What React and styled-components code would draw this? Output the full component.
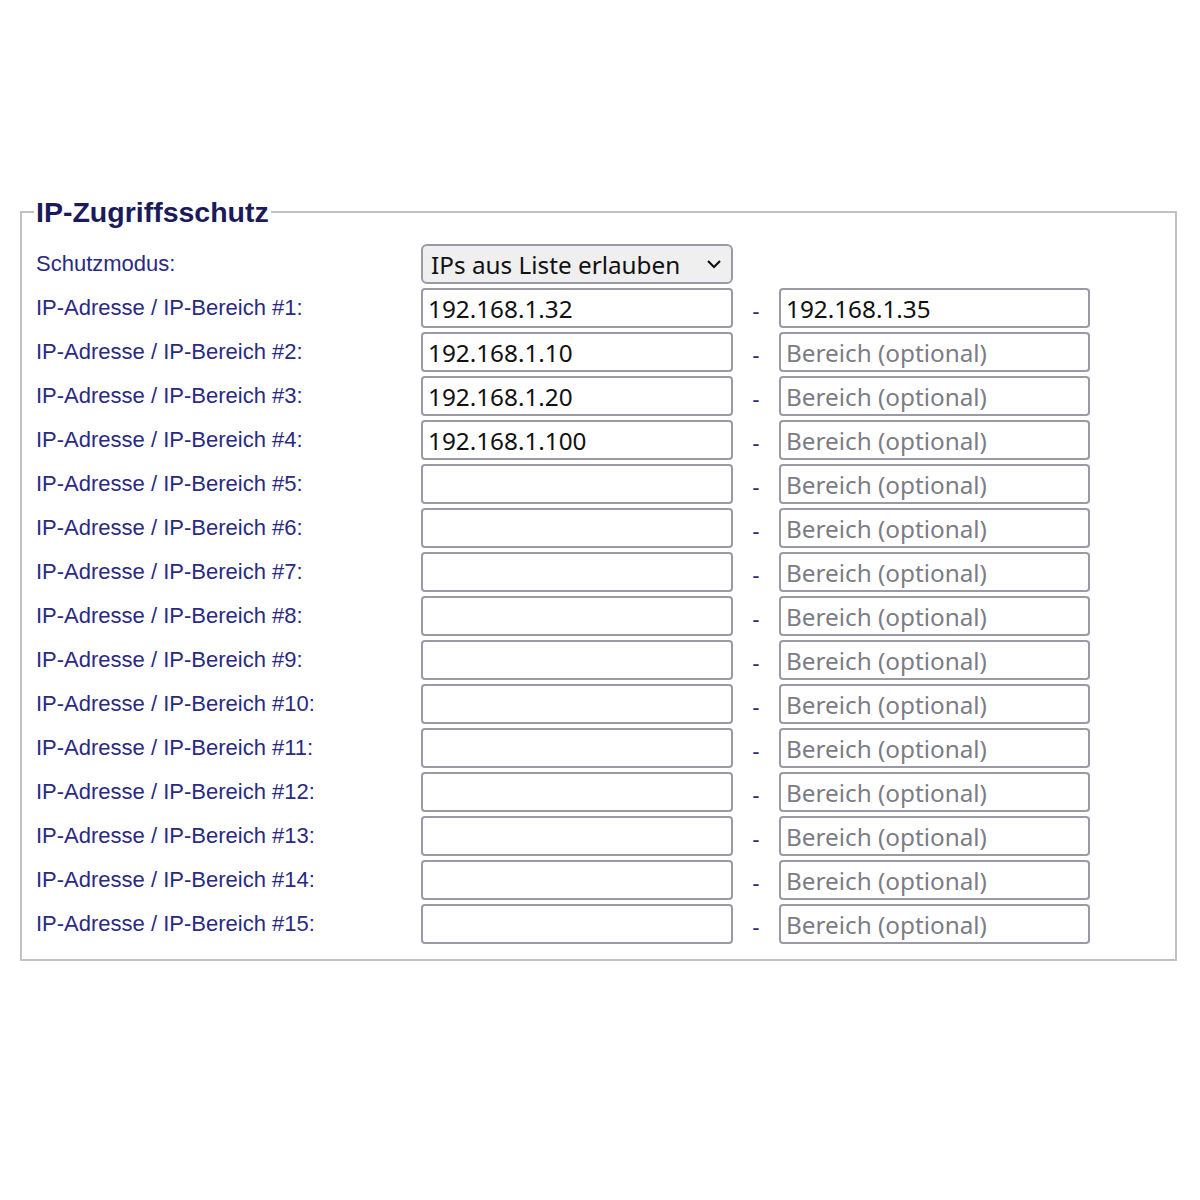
import React, { useState } from "react";
import styled, { createGlobalStyle } from "styled-components";

const GlobalStyle = createGlobalStyle`
  html, body {
    margin: 0;
    padding: 0;
    background: #ffffff;
  }
  body {
    font-family: "Liberation Sans", Arial, sans-serif;
  }
`;

const Page = styled.div`
  padding: 196px 23px 0 20px;
  width: 1200px;
  box-sizing: border-box;
`;

const Fieldset = styled.fieldset`
  margin: 0;
  width: 1157px;
  box-sizing: border-box;
  border: 2px solid #c2c2c2;
  padding: 16px 14px 15px 14px;
`;

const Legend = styled.legend`
  margin-left: -2px;
  padding: 0 2px;
  font-family: "Liberation Sans", Arial, sans-serif;
  font-weight: bold;
  font-size: 28.5px;
  line-height: 32px;
  color: #1b1b5c;
`;

const Grid = styled.div`
  display: grid;
  grid-template-columns: 385px 312px 46px 311px;
  grid-auto-rows: 40px;
  row-gap: 4px;
  align-items: center;
`;

const Label = styled.label`
  font-family: "Liberation Sans", Arial, sans-serif;
  font-size: 22px;
  color: #2a2a82;
  white-space: nowrap;
`;

const Dash = styled.span`
  font-family: "Liberation Sans", Arial, sans-serif;
  font-size: 22px;
  color: #2a2a82;
  text-align: center;
  padding-top: 8px;
`;

const Field = styled.input`
  box-sizing: border-box;
  width: 100%;
  height: 40px;
  margin: 0;
  border: 2px solid #9a9aa6;
  border-radius: 4px;
  padding: 0 5px;
  background: #ffffff;
  font-family: "Noto Sans", "Segoe UI", sans-serif;
  font-size: 24.3px;
  color: #111111;
  outline: none;

  &::placeholder {
    color: #7c7c86;
  }
`;

const SelectWrap = styled.div`
  position: relative;
  height: 40px;
`;

const Select = styled.select`
  appearance: none;
  box-sizing: border-box;
  width: 100%;
  height: 40px;
  margin: 0;
  border: 2px solid #9a9aa6;
  border-radius: 6px;
  padding: 0 40px 0 8px;
  background: #efeff0;
  font-family: "Noto Sans", "Segoe UI", sans-serif;
  font-size: 24.3px;
  color: #111111;
  outline: none;
`;

const Chevron = styled.svg`
  position: absolute;
  right: 11px;
  top: 15px;
  pointer-events: none;
`;

const initialRanges = [
  { from: "192.168.1.32", to: "192.168.1.35" },
  { from: "192.168.1.10", to: "" },
  { from: "192.168.1.20", to: "" },
  { from: "192.168.1.100", to: "" },
  ...Array.from({ length: 11 }, () => ({ from: "", to: "" })),
];

export default function App() {
  const [mode, setMode] = useState("allow");
  const [ranges, setRanges] = useState(initialRanges);

  const update = (i, key, value) =>
    setRanges(ranges.map((r, j) => (j === i ? { ...r, [key]: value } : r)));

  return (
    <Page>
      <GlobalStyle />
      <Fieldset>
        <Legend>IP-Zugriffsschutz</Legend>
        <Grid>
          <Label htmlFor="mode">Schutzmodus:</Label>
          <SelectWrap>
            <Select id="mode" value={mode} onChange={(e) => setMode(e.target.value)}>
              <option value="allow">IPs aus Liste erlauben</option>
              <option value="deny">IPs aus Liste sperren</option>
              <option value="off">Aus</option>
            </Select>
            <Chevron width="16" height="10" viewBox="0 0 16 10">
              <path d="M2 2 L8 8 L14 2" fill="none" stroke="#111" strokeWidth="2.2" />
            </Chevron>
          </SelectWrap>
          <span />
          <span />
          {ranges.map((r, i) => (
            <React.Fragment key={i}>
              <Label htmlFor={`ip${i}`}>IP-Adresse / IP-Bereich #{i + 1}:</Label>
              <Field
                id={`ip${i}`}
                value={r.from}
                onChange={(e) => update(i, "from", e.target.value)}
              />
              <Dash>-</Dash>
              <Field
                placeholder="Bereich (optional)"
                value={r.to}
                onChange={(e) => update(i, "to", e.target.value)}
              />
            </React.Fragment>
          ))}
        </Grid>
      </Fieldset>
    </Page>
  );
}
